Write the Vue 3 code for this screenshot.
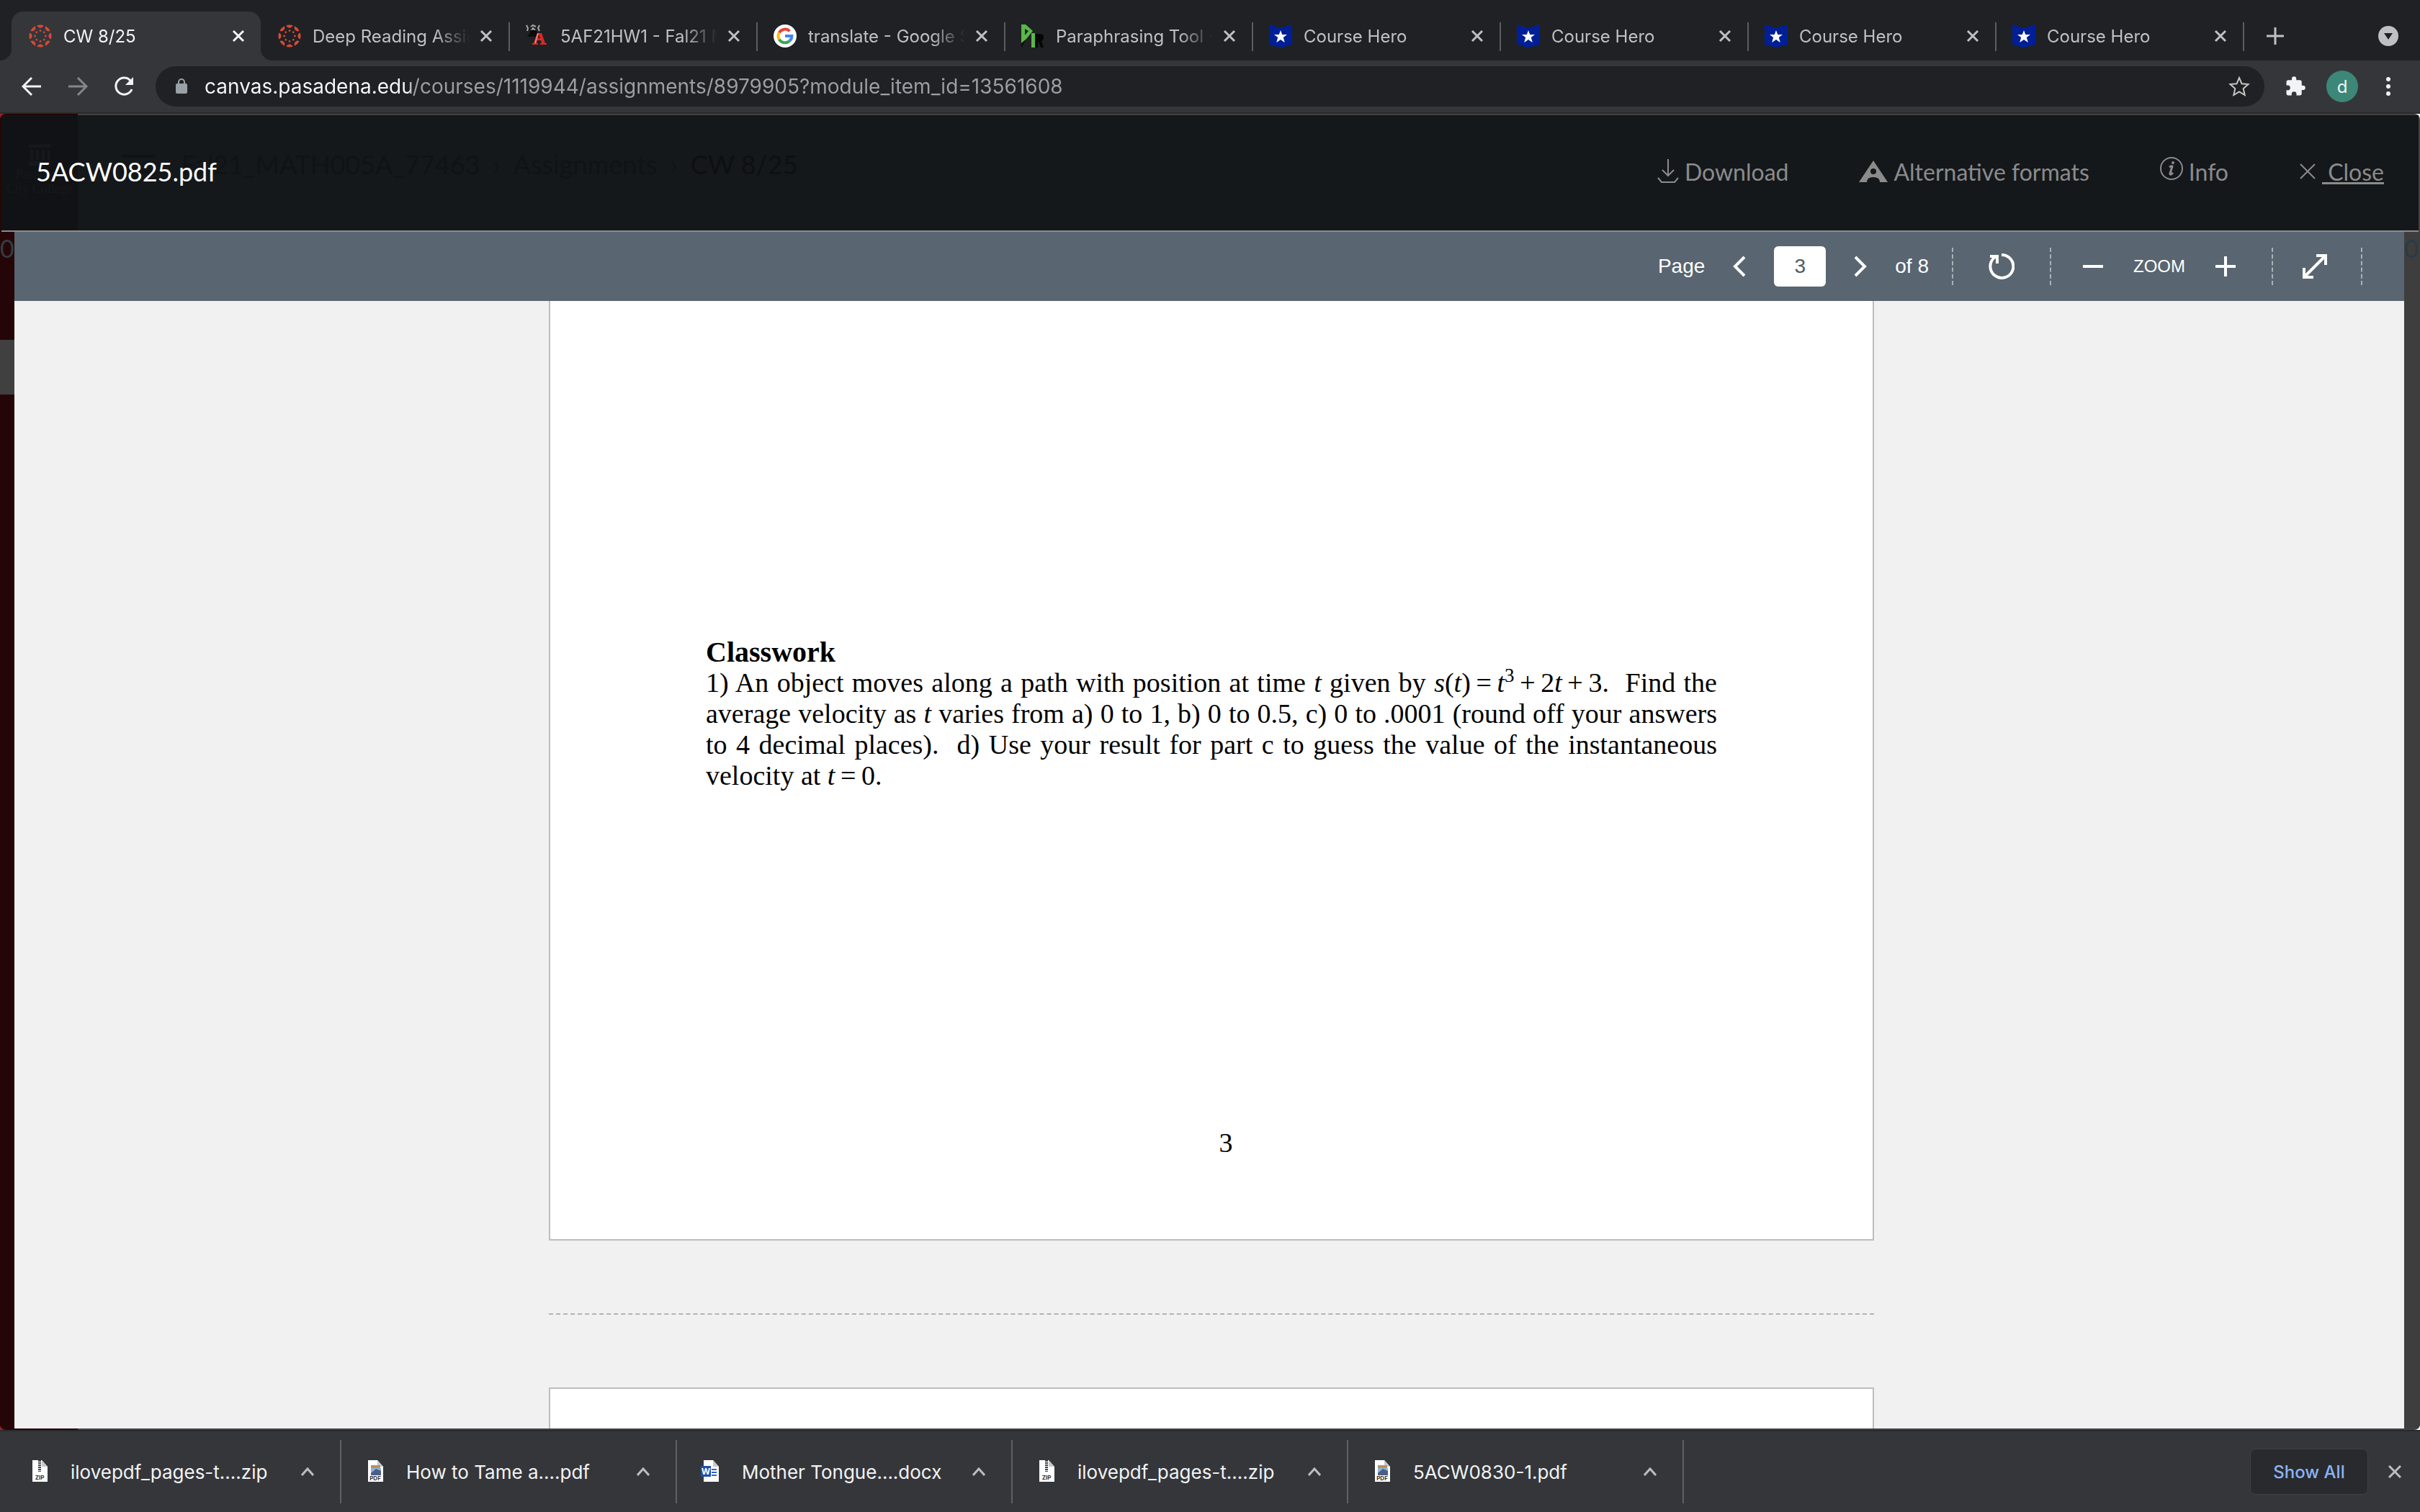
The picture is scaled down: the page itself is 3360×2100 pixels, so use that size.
<script setup>
import { ref } from 'vue'

const tabs = ref([
  { id: 1, title: 'CW 8/25', icon: 'canvas' },
  { id: 2, title: 'Deep Reading Assignment', icon: 'canvas' },
  { id: 3, title: '5AF21HW1 - Fal21 MATH', icon: 'webassign' },
  { id: 4, title: 'translate - Google Search', icon: 'google' },
  { id: 5, title: 'Paraphrasing Tool - Quill', icon: 'para' },
  { id: 6, title: 'Course Hero', icon: 'hero' },
  { id: 7, title: 'Course Hero', icon: 'hero' },
  { id: 8, title: 'Course Hero', icon: 'hero' },
  { id: 9, title: 'Course Hero', icon: 'hero' },
])
const activeTab = ref(1)

const url = ref('canvas.pasadena.edu/courses/1119944/assignments/8979905?module_item_id=13561608')
const page = ref(3)
const pageCount = 8

const downloads = ref([
  { name: 'ilovepdf_pages-t....zip', type: 'zip' },
  { name: 'How to Tame a....pdf', type: 'pdf' },
  { name: 'Mother Tongue....docx', type: 'doc' },
  { name: 'ilovepdf_pages-t....zip', type: 'zip' },
  { name: '5ACW0830-1.pdf', type: 'pdf' },
])

const spokes = [0, 45, 90, 135, 180, 225, 270, 315]

function closeTab(id) {
  tabs.value = tabs.value.filter((t) => t.id !== id)
}

function step(n) {
  page.value = Math.min(pageCount, Math.max(1, Number(page.value) + n))
}
</script>

<template>
  <div class="browser">
    <nav class="tabs" aria-label="Tabs">
      <div
        v-for="tab in tabs"
        :key="tab.id"
        class="tab"
        :class="{ active: tab.id === activeTab }"
        @click="activeTab = tab.id"
      >
        <svg v-if="tab.icon === 'canvas'" class="favicon" viewBox="0 0 32 32">
          <g v-for="a in spokes" :key="a" :transform="`rotate(${a} 16 16)`" fill="#d64a35">
            <path d="M11.5 1.200A15.500 15.500 0 0 1 20.500 1.200A4.700 4.700 0 0 1 11.500 1.200Z" />
            <circle cx="16" cy="8.600" r="1.400" />
          </g>
        </svg>
        <svg v-else-if="tab.icon === 'webassign'" class="favicon" viewBox="0 0 32 32">
          <path d="M1 1l2 4-1 4M7 3l3-2 4 2M8 8l2-3 3 3M19 1l-2 4 2 4" stroke="#a5a5a5" stroke-width="2" fill="none" />
          <path d="M7 8h7l2 4-2 5H6l-4-1 3-3z" fill="#0a0a0a" />
          <path d="M9 28v-2h2l5-14h6l5 14h2v2h-9v-2h2l-1-4h-5l-1 4h2v2z" fill="#d92a24" />
          <path d="M17 19h3l-2-5z" fill="#202124" />
          <path d="M16 12h2l-4 14h-2z" fill="#f08078" />
        </svg>
        <svg v-else-if="tab.icon === 'google'" class="favicon" viewBox="0 0 32 32">
          <circle cx="16" cy="16" r="16" fill="#fff" />
          <g fill="none" stroke-width="4">
            <path d="M22.500 9.200A9.500 9.500 0 0 0 7.800 11.300" stroke="#ea4335" />
            <path d="M7.800 11.300a9.500 9.500 0 0 0 0 9.400" stroke="#fbbc05" />
            <path d="M7.800 20.700a9.500 9.500 0 0 0 14.200 2.400" stroke="#34a853" />
            <path d="M22 23.100a9.500 9.500 0 0 0 3.400-7.100H16" stroke="#4285f4" />
          </g>
        </svg>
        <svg v-else-if="tab.icon === 'para'" class="favicon" viewBox="0 0 32 32">
          <path d="M0 32V24l5-6v5zM19 32V13h7q5 0 5 5 0 4-3 5l3 9h-4l-3-8h-1v8z" fill="#060606" />
          <path d="M0 0h6l10 9-9 11-7 6zM5 6v9l5-6z" fill="#58b947" fill-rule="evenodd" />
          <path d="M14 12h5v20h-5z" fill="#58b947" />
        </svg>
        <svg v-else class="favicon" viewBox="0 0 32 32">
          <path d="M0 0l16 5 16-5v28l-16 4-16-4z" fill="#001f96" />
          <path d="M16 8l2.200 6H25l-5.200 4 2 7L16 21l-5.800 4 2-7L7 14h6.800z" fill="#fff" />
        </svg>
        <span class="tabTitle">{{ tab.title }}</span>
        <button type="button" class="iconBtn" :aria-label="`Close ${tab.title}`" @click.stop="closeTab(tab.id)">
          <svg width="18" height="18" viewBox="0 0 18 18"><path d="M2 2l14 14M16 2L2 16" /></svg>
        </button>
      </div>
      <button type="button" class="iconBtn newTab" aria-label="New tab">
        <svg width="26" height="26" viewBox="0 0 26 26"><path d="M13 1v24M1 13h24" /></svg>
      </button>
      <button type="button" class="iconBtn tabSearch" aria-label="Search tabs">
        <svg width="28" height="28" viewBox="0 0 28 28">
          <circle cx="14" cy="14" r="14" fill="#bdc1c6" stroke="none" />
          <path d="M8 10h12l-6 9z" fill="#202124" stroke="none" />
        </svg>
      </button>
    </nav>

    <div class="omni">
      <button type="button" class="iconBtn" aria-label="Back">
        <svg width="28" height="28" viewBox="0 0 28 28"><path d="M27 14H3M14 2L2 14l12 12" /></svg>
      </button>
      <button type="button" class="iconBtn dim" aria-label="Forward">
        <svg width="28" height="28" viewBox="0 0 28 28"><path d="M1 14h24M14 2l12 12-12 12" /></svg>
      </button>
      <button type="button" class="iconBtn" aria-label="Reload">
        <svg width="28" height="28" viewBox="0 0 28 28">
          <path d="M25 18A11.500 11.500 0 1 1 23 6" />
          <path d="M27 1v11H16z" fill="currentColor" stroke="none" />
        </svg>
      </button>
      <div class="address">
        <svg width="16" height="22" viewBox="0 0 16 22">
          <rect y="7" width="16" height="14" rx="2" fill="#9aa0a6" stroke="none" />
          <path d="M4 8V5a4 4 0 0 1 8 0v3" fill="none" stroke="#9aa0a6" stroke-width="2" />
        </svg>
        <input v-model="url" type="text" aria-label="Address" spellcheck="false" />
        <button type="button" class="iconBtn star" aria-label="Bookmark this tab">
          <svg width="30" height="30" viewBox="0 0 30 30">
            <path d="M15 3l3.500 8.300 9 .8-6.800 6 2 8.900L15 22.300 7.300 27l2-8.900-6.800-6 9-.8z" />
          </svg>
        </button>
      </div>
      <button type="button" class="iconBtn" aria-label="Extensions">
        <svg width="30" height="30" viewBox="0 0 24 24">
          <path
            fill="currentColor"
            stroke="none"
            d="M20.500 11H19V7c0-1.100-.9-2-2-2h-4V3.500a2.500 2.500 0 0 0-5 0V5H4c-1.100 0-2 .9-2 2v3.800h1.500a2.700 2.700 0 0 1 0 5.400H2V20c0 1.100.9 2 2 2h3.800v-1.500a2.700 2.700 0 0 1 5.400 0V22H17c1.100 0 2-.9 2-2v-4h1.500a2.500 2.500 0 0 0 0-5z"
          />
        </svg>
      </button>
      <button type="button" class="avatar" aria-label="Profile">d</button>
      <button type="button" class="iconBtn" aria-label="Menu">
        <svg width="8" height="28" viewBox="0 0 8 28" class="dots">
          <circle cx="4" cy="4" r="3" />
          <circle cx="4" cy="14" r="3" />
          <circle cx="4" cy="24" r="3" />
        </svg>
      </button>
    </div>

    <div class="frame">
      <main class="stage">
        <header class="fileBar">
          <div class="behind" aria-hidden="true">
            <div class="college">
              <svg width="30" height="32" viewBox="0 0 30 32">
                <path d="M0 1l30-1v5H0zM2 8h4v14H2zM10 8h4v14h-4zM18 8h4v14h-4zM26 8h3v14h-3zM0 24h30v6H0z" />
              </svg>
              <span>Pasadena</span>
              <span>City College</span>
            </div>
            <div class="crumbs">
              <span class="burger"></span>
              <span>Fal21_MATH005A_77463</span>
              <span>›</span>
              <span>Assignments</span>
              <span>›</span>
              <span class="here">CW 8/25</span>
            </div>
          </div>
          <h1>5ACW0825.pdf</h1>
          <div class="fileLinks">
            <a href="#">
              <svg width="30" height="34" viewBox="0 0 30 34">
                <path d="M15 0v22M7 15l8 8 8-8M1 26l5 6h18l5-6" />
              </svg>
              Download
            </a>
            <a href="#">
              <svg width="40" height="32" viewBox="0 0 40 32">
                <path
                  fill="currentColor"
                  fill-rule="evenodd"
                  stroke="none"
                  d="M20 1l20 30H29q0-7-9-7t-9 7H0zM20 12a4 4 0 0 0 0 8 4 4 0 0 0 0-8z"
                />
              </svg>
              Alternative formats
            </a>
            <a href="#">
              <svg class="info" width="32" height="32" viewBox="0 0 32 32">
                <circle cx="16" cy="16" r="15" />
                <circle cx="18" cy="8" r="2" fill="currentColor" stroke="none" />
                <path d="M13 14q3-2 4-1l-3 10q0 3 4-1" stroke-width="3" />
              </svg>
              Info
            </a>
            <a href="#" class="close">
              <svg width="24" height="24" viewBox="0 0 24 24"><path d="M2 2l20 20M22 2L2 22" /></svg>
              <span>&nbsp;Close</span>
            </a>
          </div>
        </header>

        <div class="middle">
          <aside class="gutter left" aria-hidden="true">
            <span>0</span>
            <i></i>
          </aside>

          <section class="viewer">
            <div class="pdfBar">
              <label for="page">Page</label>
              <button type="button" class="iconBtn prev" aria-label="Previous page" @click="step(-1)">
                <svg width="20" height="30" viewBox="0 0 20 30"><path d="M17 2L4 15l13 13" /></svg>
              </button>
              <input id="page" v-model="page" type="text" />
              <button type="button" class="iconBtn next" aria-label="Next page" @click="step(1)">
                <svg width="20" height="30" viewBox="0 0 20 30"><path d="M3 2l13 13L3 28" /></svg>
              </button>
              <span class="count">of {{ pageCount }}</span>
              <div class="group rotate">
                <button type="button" class="iconBtn" aria-label="Rotate">
                  <svg width="36" height="36" viewBox="0 0 36 36">
                    <path d="M18 2a16 16 0 1 1-9 3" />
                    <path d="M2 4h10v10" />
                  </svg>
                </button>
              </div>
              <div class="group zoom">
                <button type="button" class="iconBtn" aria-label="Zoom out">
                  <svg width="28" height="28" viewBox="0 0 28 28"><path d="M0 14h28" /></svg>
                </button>
                <span>ZOOM</span>
                <button type="button" class="iconBtn" aria-label="Zoom in">
                  <svg width="28" height="28" viewBox="0 0 28 28"><path d="M0 14h28M14 0v28" /></svg>
                </button>
              </div>
              <div class="group full">
                <button type="button" class="iconBtn" aria-label="Full screen">
                  <svg width="36" height="36" viewBox="0 0 36 36">
                    <path d="M3 33L33 3M20 3h13v13M3 20v13h13" />
                  </svg>
                </button>
              </div>
            </div>

            <div class="scroller">
              <article class="sheet">
                <h2>Classwork</h2>
                <p>
                  <span class="line">1) An object moves along a path with position at time <i>t</i> given by <span class="math"><i>s</i>(<i>t</i>)&#8201;=&#8201;<i>t</i><sup>3</sup>&#8201;+&#8201;2<i>t</i>&#8201;+&#8201;3.</span>&nbsp; Find the</span>
                  <span class="line">average velocity as <i>t</i> varies from a) 0 to 1, b) 0 to 0.5, c) 0 to .0001 (round off your answers</span>
                  <span class="line">to 4 decimal places).&nbsp; d) Use your result for part c to guess the value of the instantaneous</span>
                  <span class="line last">velocity at <i>t</i>&#8201;=&#8201;0.</span>
                </p>
                <footer>3</footer>
              </article>
              <hr />
              <article class="sheet following"></article>
            </div>
          </section>

          <aside class="gutter right" aria-hidden="true"><span>0</span></aside>
        </div>
      </main>
    </div>

    <div class="shelf">
      <div v-for="(d, i) in downloads" :key="i" class="download">
        <svg class="fileIcon" width="28" height="32" viewBox="0 0 28 32">
          <path d="M5 0h13l8 9v21H5z" fill="#fff" />
          <path d="M18 0l8 9h-8z" fill="#c9c9c9" />
          <template v-if="d.type === 'zip'">
            <path d="M15 0v16" stroke="#444" stroke-width="4" stroke-dasharray="2 1" />
            <text x="15" y="27" class="tag">ZIP</text>
          </template>
          <template v-else-if="d.type === 'pdf'">
            <path d="M9 7h13v4H9z" fill="#b8925a" />
            <path d="M9 11h14v10H9z" fill="#8fb2e2" />
            <path d="M9 18l7-6 7 3v6H9z" fill="#4b5f86" />
            <text x="15" y="28" class="tag">PDF</text>
          </template>
          <template v-else>
            <path d="M16 13h7M16 17h7M16 21h7" stroke="#2b66c4" stroke-width="2" />
            <path d="M1 8h14v15H1z" fill="#1e4fae" />
            <text x="8" y="20" class="word">W</text>
          </template>
        </svg>
        <button type="button" class="fileName">{{ d.name }}</button>
        <button type="button" class="iconBtn" aria-label="Download options">
          <svg width="18" height="12" viewBox="0 0 18 12"><path d="M1 11l8-9 8 9" /></svg>
        </button>
      </div>
      <button type="button" class="showAll">Show All</button>
      <button type="button" class="iconBtn closeShelf" aria-label="Close downloads">
        <svg width="18" height="18" viewBox="0 0 18 18"><path d="M1 1l16 16M17 1L1 17" /></svg>
      </button>
    </div>
  </div>
</template>

<style>
body {
  margin: 0;
}
</style>

<style scoped>
.browser {
  display: flex;
  flex-direction: column;
  height: 100vh;
  overflow: hidden;
  background: #35363a;
  font-family: Inter, Roboto, sans-serif;
}
button,
input {
  font: inherit;
  color: inherit;
  border: 0;
  padding: 0;
  margin: 0;
  background: none;
}
svg {
  display: block;
  flex: none;
  fill: none;
  stroke: currentColor;
  stroke-width: 3;
}
.iconBtn {
  display: flex;
  flex: none;
  align-items: center;
  justify-content: center;
}

/* tab strip */
.tabs {
  display: flex;
  padding: 16px 30px 0 16px;
  background: #202124;
  color: #bdc1c6;
  font-size: 24px;
}
.tab {
  position: relative;
  display: flex;
  align-items: center;
  flex: 0 1 344px;
  min-width: 0;
  height: 68px;
  box-sizing: border-box;
  padding: 0 22px 0 24px;
}
.tab:not(.active)::after {
  content: '';
  position: absolute;
  right: -2px;
  top: 15px;
  width: 2px;
  height: 40px;
  background: #5b5d61;
}
.tab.active {
  flex-basis: 346px;
  border-radius: 16px 16px 0 0;
  background: #35363a;
  color: #f1f3f4;
}
.tab.active::before,
.tab.active::after {
  content: '';
  position: absolute;
  bottom: 0;
  width: 16px;
  height: 16px;
}
.tab.active::before {
  left: -16px;
  background: radial-gradient(circle at 0 0, transparent 16px, #35363a 16px);
}
.tab.active::after {
  right: -16px;
  background: radial-gradient(circle at 100% 0, transparent 16px, #35363a 16px);
}
.favicon {
  width: 32px;
  height: 32px;
  stroke: none;
}
.tabTitle {
  flex: 1;
  min-width: 0;
  margin: 0 14px 0 16px;
  overflow: hidden;
  white-space: nowrap;
  mask-image: linear-gradient(90deg, #000 calc(100% - 48px), transparent);
}
.newTab {
  margin-left: 32px;
}
.tabSearch {
  margin-left: auto;
}

/* address row */
.omni {
  display: flex;
  align-items: center;
  gap: 36px;
  padding: 8px 40px 8px 30px;
  color: #f1f3f4;
}
.dim {
  color: #84868a;
}
.address {
  display: flex;
  align-items: center;
  flex: 1;
  height: 56px;
  box-sizing: border-box;
  padding: 0 20px 0 28px;
  margin: 0 -8px 0 -6px;
  border-radius: 28px;
  background: #202124;
  font-size: 28px;
}
.address svg {
  stroke-width: 2;
}
.address input {
  flex: 1;
  min-width: 0;
  margin-left: 24px;
  outline: 0;
  /* the host is brighter than the path */
  background: linear-gradient(90deg, #f8f9fa 286px, #9aa0a6 286px);
  background-clip: text;
  color: transparent;
}
.star {
  color: #c4c7c5;
}
.avatar {
  width: 44px;
  height: 44px;
  margin: 0 2px 0 -8px;
  border-radius: 50%;
  background: #3c8778;
  font-size: 24px;
}
.dots {
  fill: currentColor;
  stroke: none;
}

/* page frame */
.frame {
  display: flex;
  flex: 1;
  min-height: 0;
  border: solid #292a2b;
  border-width: 2px 0;
  background: linear-gradient(90deg, #97262a 50%, #fff 50%);
}
.stage {
  display: flex;
  flex-direction: column;
  flex: 1;
  min-width: 0;
  overflow: hidden;
  border-radius: 8px;
  background: linear-gradient(90deg, #250608 108px, #424242 108px);
}
.fileBar {
  position: relative;
  display: flex;
  align-items: center;
  justify-content: space-between;
  height: 160px;
  box-sizing: content-box;
  margin: 2px 2px 0;
  padding: 0 48px;
  border-bottom: 2px solid #8b8b8b;
  background: #14181b;
  font-family: Lato, sans-serif;
}
.behind {
  position: absolute;
  inset: 0;
  display: flex;
  color: #101315;
}
.college {
  display: flex;
  flex-direction: column;
  align-items: center;
  width: 106px;
  padding-top: 40px;
  box-sizing: border-box;
  background: #111215;
  color: #17181b;
  font: 18px/20px 'Liberation Serif', serif;
  white-space: nowrap;
}
.college svg {
  fill: currentColor;
  stroke: none;
}
.crumbs {
  display: flex;
  align-items: center;
  gap: 18px;
  height: 136px;
  margin-left: 60px;
  font-size: 36px;
}
.burger {
  width: 48px;
  height: 26px;
  margin-right: 18px;
  box-sizing: border-box;
  border-top: 4px solid;
  border-bottom: 4px solid;
}
.here {
  color: #0d0f11;
}
h1 {
  position: relative;
  margin: 0 0 4px;
  color: #fff;
  font-size: 36px;
  font-weight: 400;
}
.fileLinks {
  position: relative;
  display: flex;
  gap: 98px;
  margin-bottom: 4px;
  color: #8b8b8b;
  font-size: 32px;
}
.fileLinks a {
  display: flex;
  align-items: center;
  gap: 8px;
  color: inherit;
  text-decoration: none;
}
.fileLinks svg {
  stroke-width: 2;
}
.info {
  margin-bottom: 8px;
}
.close span {
  text-decoration: underline;
}

.middle {
  display: flex;
  flex: 1;
  min-height: 0;
  margin-bottom: 2px;
}
.gutter {
  width: 20px;
  overflow: hidden;
  background: #250608;
  color: #363c42;
  font: 34px/46px Lato, sans-serif;
}
.gutter.right {
  width: 22px;
  background: #3e3e3e;
  color: #2a3a46;
}
.gutter span {
  display: block;
}
.gutter i {
  display: block;
  height: 76px;
  margin-top: 104px;
  background: #404040;
}
.viewer {
  display: flex;
  flex-direction: column;
  flex: 1;
  min-width: 0;
  background: #f1f1f1;
}
.pdfBar {
  display: flex;
  align-items: center;
  justify-content: flex-end;
  flex: none;
  height: 96px;
  padding-right: 58px;
  background: #596570;
  color: #fff;
  font: 28px 'Liberation Sans', Arial, sans-serif;
}
.pdfBar svg {
  stroke-width: 4;
}
.prev {
  margin: 0 38px;
}
.pdfBar input {
  width: 72px;
  height: 56px;
  border-radius: 6px;
  background: #fff;
  color: #4e5a66;
  text-align: center;
}
.next,
.count {
  margin-left: 38px;
}
.group {
  display: flex;
  align-items: center;
  justify-content: center;
  height: 52px;
  box-sizing: border-box;
  border-left: 2px dashed #a9b1b9;
}
.rotate {
  width: 136px;
  margin-left: 32px;
}
.zoom {
  gap: 42px;
  width: 308px;
  padding-right: 6px;
  font-size: 24px;
}
.full {
  width: 126px;
  padding-right: 6px;
  border-right: 2px dashed #a9b1b9;
}

/* document pages */
.scroller {
  flex: 1;
  min-height: 0;
  overflow: hidden;
  padding-left: 6px;
}
.sheet {
  display: flex;
  flex-direction: column;
  width: 1840px;
  max-width: 100%;
  box-sizing: border-box;
  margin: 0 auto;
  padding: 466px 216px 112px;
  border: 2px solid #bdbdbd;
  border-top: 0;
  background: #fff;
  color: #000;
  font: 38px/43px 'Liberation Serif', 'Times New Roman', serif;
}
.sheet h2 {
  margin: 0;
  font-size: 40px;
}
.sheet p {
  margin: 0;
}
.line {
  display: block;
  text-align-last: justify;
}
.line.last {
  text-align-last: left;
}
.math {
  white-space: nowrap;
}
sup {
  font-size: 27px;
  line-height: 0;
}
.sheet footer {
  margin: 467px 0 0 40px;
  text-align: center;
}
hr {
  width: 1840px;
  max-width: 100%;
  margin: 101px auto;
  border: 0;
  border-top: 2px dashed #b4b4b4;
}
.following {
  height: 600px;
  border-top: 2px solid #bdbdbd;
}

/* downloads */
.shelf {
  display: flex;
  align-items: center;
  height: 112px;
  padding-right: 26px;
  color: #f1f3f4;
  font-size: 26px;
}
.download {
  display: flex;
  align-items: center;
  flex: 0 1 466px;
  min-width: 0;
  height: 88px;
  box-sizing: border-box;
  padding: 0 36px 0 32px;
  border-right: 2px solid #5f6064;
}
.download:first-child {
  flex-basis: 474px;
  padding-left: 40px;
}
.fileName {
  flex: 1;
  min-width: 0;
  margin-left: 30px;
  overflow: hidden;
  text-align: left;
  white-space: nowrap;
}
.fileIcon {
  stroke: none;
}
.tag {
  fill: #333;
  font-size: 8px;
  font-weight: 700;
  text-anchor: middle;
}
.word {
  fill: #fff;
  font-size: 12px;
  font-weight: 700;
  text-anchor: middle;
}
.download .iconBtn,
.closeShelf {
  color: #bdbdbd;
}
.showAll {
  width: 164px;
  height: 64px;
  margin-left: auto;
  border: 1px solid #3f4044;
  border-radius: 8px;
  background: #292a2d;
  color: #8ab4f8;
  font-size: 24px;
  font-weight: 500;
}
.closeShelf {
  margin-left: 28px;
}
</style>
